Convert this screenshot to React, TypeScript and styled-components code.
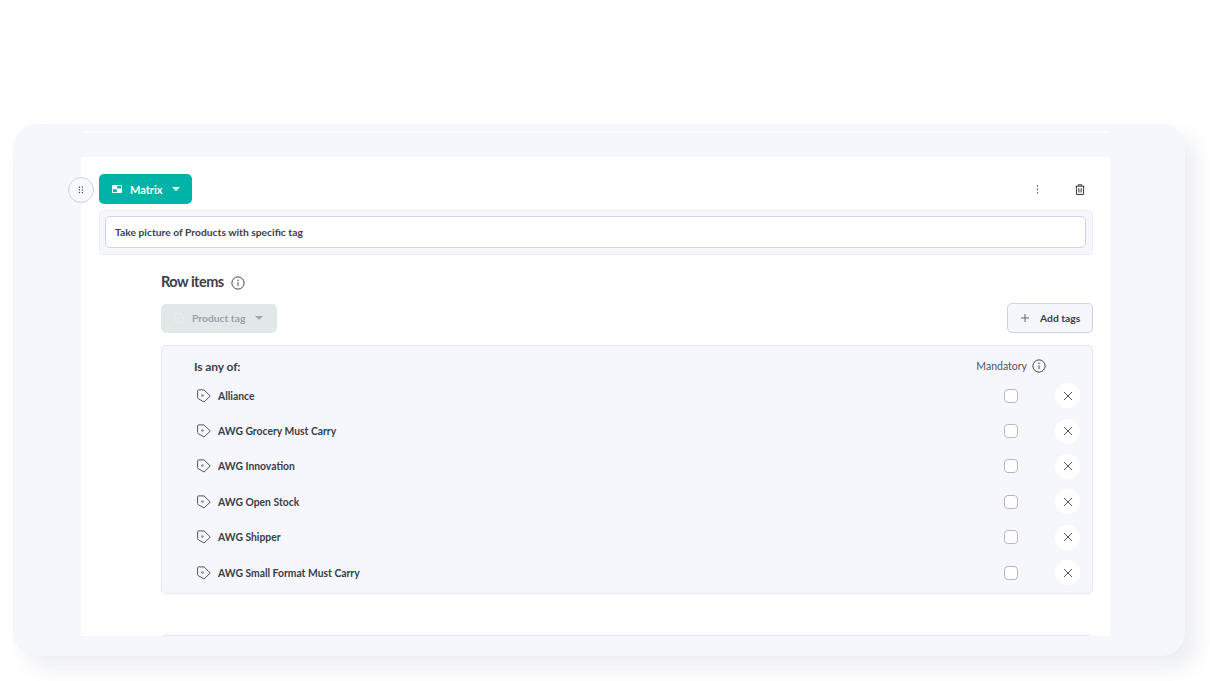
import React from "react";
import styled, { createGlobalStyle } from "styled-components";

const Global = createGlobalStyle`
  html, body { margin: 0; padding: 0; background: #fff; overflow: hidden; }
  body { font-family: "Lato", "Liberation Sans", sans-serif; color: #3a3d4a; }
  * { box-sizing: border-box; }
`;

const Page = styled.div`
  width: 1210px;
  height: 681px;
  padding: 124px 25px 25px 13px;
`;

const Frame = styled.div`
  width: 1172px;
  height: 532px;
  background: #f5f7fc;
  border-radius: 24px;
  box-shadow: 12px 12px 20px rgba(60, 70, 110, 0.09);
  padding: 7px 75px 0 68px;
  display: flex;
  flex-direction: column;
`;

const TopLine = styled.div`
  height: 2px;
  margin: 0 2px;
  background: #fbfcfe;
  flex: none;
`;

const Card = styled.div`
  position: relative;
  margin-top: 24px;
  width: 1029px;
  height: 479px;
  background: #fff;
  border-radius: 3px 3px 0 0;
  padding: 17px 17px 0 18px;
  display: flex;
  flex-direction: column;
`;

const Handle = styled.div`
  position: absolute;
  left: -13px;
  top: 20px;
  width: 26px;
  height: 26px;
  border-radius: 50%;
  background: #f7f8fc;
  border: 1px solid #cfd2e4;
  display: flex;
  align-items: center;
  justify-content: center;
  color: #555;
`;

const TopRow = styled.div`
  display: flex;
  align-items: center;
  height: 30px;
  flex: none;
`;

const TypeButton = styled.div`
  width: 93px;
  height: 30px;
  border-radius: 5px;
  background: #00b3a7;
  color: #fff;
  font-size: 11px;
  font-weight: 700;
  display: flex;
  align-items: center;
  padding-left: 13px;
`;

const TypeLabel = styled.span`
  margin-left: 8px;
  margin-right: 9px;
`;

const Caret = styled.span<{ $color: string; $gap?: number }>`
  width: 0;
  height: 0;
  border-left: 4px solid transparent;
  border-right: 4px solid transparent;
  border-top: 4.5px solid ${(p) => p.$color};
  margin-top: -1px;
  margin-left: ${(p) => p.$gap ?? 0}px;
`;

const Actions = styled.div`
  margin-left: auto;
  display: flex;
  align-items: center;
  gap: 36px;
  padding-right: 8px;
  color: #444;
`;

const QuestionBox = styled.div`
  margin-top: 6px;
  height: 45px;
  width: 994px;
  padding: 5px 6px 5px 5px;
  background: #f5f7fc;
  border: 1px solid #e8eaf5;
  border-radius: 5px;
  flex: none;
`;

const QuestionInput = styled.div`
  height: 32px;
  width: 100%;
  background: #fff;
  border: 1px solid #cfd1e6;
  border-radius: 5px;
  padding-left: 9px;
  display: flex;
  align-items: center;
  font-size: 10.3px;
  font-weight: 700;
  color: #3b3d4b;
`;

const Section = styled.div`
  margin-left: 62px;
  width: 932px;
  flex: none;
  display: flex;
  flex-direction: column;
`;

const SectionHead = styled.div`
  margin-top: 16px;
  height: 20px;
  display: flex;
  align-items: center;
  gap: 7px;
  font-size: 14.5px;
  font-weight: 700;
  color: #3b3d48;
  letter-spacing: -0.5px;
`;

const InfoIcon = styled.span<{ $drop?: number }>`
  display: inline-flex;
  color: #3f3f44;
  margin-top: ${(p) => p.$drop ?? 0}px;
`;

const Toolbar = styled.div`
  margin-top: 12px;
  height: 30px;
  display: flex;
  justify-content: space-between;
  align-items: center;
`;

const DisabledSelect = styled.div`
  width: 116px;
  height: 29px;
  background: #e2e8e8;
  border-radius: 5px;
  color: #9ba1ac;
  font-size: 10.3px;
  font-weight: 700;
  display: flex;
  align-items: center;
  padding-left: 12px;
  gap: 6px;
`;

const AddButton = styled.div`
  width: 86px;
  height: 30px;
  background: #f5f7fc;
  border: 1px solid #cfd1e6;
  border-radius: 5px;
  color: #3b3d48;
  font-size: 10.3px;
  font-weight: 700;
  display: flex;
  align-items: center;
  padding-left: 13px;
  gap: 11px;
`;

const Panel = styled.div`
  margin-top: 12px;
  height: 249px;
  background: #f5f7fc;
  border: 1px solid #e4e7f1;
  border-radius: 5px;
  padding: 0 12px 0 32px;
`;

const PanelHead = styled.div`
  height: 32px;
  padding: 8px 34px 0 0;
  display: flex;
  align-items: center;
  justify-content: space-between;
`;

const AnyOf = styled.div`
  font-size: 12px;
  font-weight: 700;
  color: #3b3d48;
  letter-spacing: -0.1px;
`;

const MandatoryHead = styled.div`
  display: flex;
  align-items: center;
  gap: 5px;
  font-size: 10.5px;
  color: #50525e;
`;

const Row = styled.div`
  height: 35.4px;
  display: flex;
  align-items: center;
  padding-left: 2px;
`;

const TagName = styled.span`
  margin-left: 6px;
  font-size: 10.35px;
  font-weight: 700;
  color: #3b3d48;
`;

const Check = styled.div`
  margin-left: auto;
  width: 14px;
  height: 14px;
  background: #fff;
  border: 1px solid #b9b9bd;
  border-radius: 4px;
`;

const Remove = styled.div`
  margin-left: 37px;
  width: 25px;
  height: 25px;
  background: #fff;
  border-radius: 50%;
  display: flex;
  align-items: center;
  justify-content: center;
  color: #555;
`;

const BottomLine = styled.div`
  margin: 41px 0 0 2px;
  width: 927px;
  height: 1px;
  background: #e4e6f2;
`;

const Info = ({ size, drop }: { size: number; drop?: number }) => (
  <InfoIcon $drop={drop}>
    <svg width={size} height={size} viewBox="0 0 16 16" fill="none" stroke="currentColor" strokeWidth="1.1">
      <circle cx="8" cy="8" r="7" />
      <path d="M8 7.2v4.2" />
      <circle cx="8" cy="4.9" r="0.8" fill="currentColor" stroke="none" />
    </svg>
  </InfoIcon>
);

const Tag = ({ color = "#55565e", size = 16 }: { color?: string; size?: number }) => (
  <svg width={size} height={size} viewBox="0 0 16 16" fill="none" stroke={color} strokeWidth="1" strokeLinejoin="round">
    <path d="M1.6 3 C1.6 2.3 2 1.9 2.6 1.9 H8 L14.3 8 L8 14 L2.2 10.6 C1.8 10.3 1.6 10 1.6 9.5 Z" />
    <circle cx="6.4" cy="7.6" r="1.4" fill={color} fillOpacity="0.6" stroke="none" />
  </svg>
);

const X = () => (
  <svg width="10" height="10" viewBox="0 0 10 10" stroke="currentColor" strokeWidth="1" fill="none">
    <path d="M1 1 L9 9 M9 1 L1 9" />
  </svg>
);

const tags = [
  "Alliance",
  "AWG Grocery Must Carry",
  "AWG Innovation",
  "AWG Open Stock",
  "AWG Shipper",
  "AWG Small Format Must Carry",
];

export default function App() {
  return (
    <Page>
      <Global />
      <Frame>
        <TopLine />
        <Card>
          <Handle>
            <svg width="6" height="8" viewBox="0 0 6 8" fill="currentColor">
              <rect x="0.8" y="0.5" width="1.2" height="1.3" />
              <rect x="3.8" y="0.5" width="1.2" height="1.3" />
              <rect x="0.8" y="3.2" width="1.2" height="1.3" />
              <rect x="3.8" y="3.2" width="1.2" height="1.3" />
              <rect x="0.8" y="5.9" width="1.2" height="1.3" />
              <rect x="3.8" y="5.9" width="1.2" height="1.3" />
            </svg>
          </Handle>
          <TopRow>
            <TypeButton>
              <svg width="10" height="8" viewBox="0 0 10 8">
                <rect x="0" y="0" width="10" height="8" rx="1" fill="#fff" />
                <rect x="5.2" y="0.9" width="3.9" height="2.6" fill="#00b3a7" />
                <rect x="0.9" y="4.3" width="3.9" height="2.8" fill="#00b3a7" />
              </svg>
              <TypeLabel>Matrix</TypeLabel>
              <Caret $color="#fff" />
            </TypeButton>
            <Actions>
              <svg width="3" height="9" viewBox="0 0 3 9" fill="currentColor">
                <rect x="1" y="0.2" width="1" height="1.4" />
                <rect x="1" y="3.7" width="1" height="1.4" />
                <rect x="1" y="7.2" width="1" height="1.4" />
              </svg>
              <svg width="10" height="11" viewBox="0 0 10 11" fill="none" stroke="currentColor" strokeWidth="1.1">
                <path d="M0.5 2.2h9M3.4 2V0.8h3.2V2M1.5 2.2v7.6c0 .5.3.8.8.8h5.4c.5 0 .8-.3.8-.8V2.2M3.9 4.2v4.4M6.1 4.2v4.4" />
              </svg>
            </Actions>
          </TopRow>
          <QuestionBox>
            <QuestionInput>Take picture of Products with specific tag</QuestionInput>
          </QuestionBox>
          <Section>
            <SectionHead>
              Row items
              <Info size={14} drop={3} />
            </SectionHead>
            <Toolbar>
              <DisabledSelect>
                <Tag color="#eef2f2" size={13} />
                Product tag
                <Caret $color="#a0a5b0" $gap={4} />
              </DisabledSelect>
              <AddButton>
                <svg width="8" height="8" viewBox="0 0 8 8" stroke="#666" strokeWidth="1" fill="none">
                  <path d="M4 0v8M0 4h8" />
                </svg>
                Add tags
              </AddButton>
            </Toolbar>
            <Panel>
              <PanelHead>
                <AnyOf>Is any of:</AnyOf>
                <MandatoryHead>
                  Mandatory
                  <Info size={14} />
                </MandatoryHead>
              </PanelHead>
              {tags.map((t) => (
                <Row key={t}>
                  <Tag />
                  <TagName>{t}</TagName>
                  <Check />
                  <Remove>
                    <X />
                  </Remove>
                </Row>
              ))}
            </Panel>
            <BottomLine />
          </Section>
        </Card>
      </Frame>
    </Page>
  );
}
